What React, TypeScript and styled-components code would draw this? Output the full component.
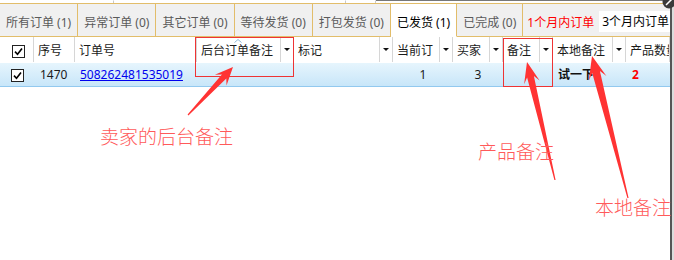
import React from "react";
import styled, { createGlobalStyle } from "styled-components";

const Global = createGlobalStyle`
  html, body { margin: 0; padding: 0; background: #fff; }
  body { font-family: "Noto Sans", "Noto Sans CJK SC", sans-serif; }
`;

const GOLD = "#e2bd6a";
const SEP = "#d6d6d6";

const Frame = styled.div`
  position: relative;
  width: 674px;
  height: 260px;
  display: flex;
  overflow: hidden;
  background: #fff;
`;

const Main = styled.div`
  width: 670px;
  display: flex;
  flex-direction: column;
  overflow: hidden;
  font-size: 12px;
`;

const EdgeDark = styled.div`
  width: 2px;
  background: #555;
`;

const EdgeLight = styled.div`
  width: 2px;
  background: #dcdcdc;
`;

const TopStrip = styled.div`
  height: 3px;
  display: flex;
`;

const StripBox = styled.div<{ $w?: number; $dark?: boolean }>`
  width: ${(p) => (p.$w ? `${p.$w}px` : "auto")};
  flex: ${(p) => (p.$w ? "none" : "1")};
  border-right: 1px solid #c8c8c8;
  border-top: 1px solid ${(p) => (p.$dark ? "#777" : "transparent")};
  box-sizing: border-box;
`;

const TabBar = styled.div`
  display: flex;
  height: 33px;
  border-top: 1px solid ${GOLD};
  background: #f0f0f0;
`;

const Tab = styled.div<{ $active?: boolean }>`
  height: 33px;
  box-sizing: border-box;
  padding: 5px 6px 0;
  display: flex;
  align-items: center;
  white-space: nowrap;
  line-height: 16px;
  color: ${(p) => (p.$active ? "#000" : "#5a5a5a")};
  background: ${(p) => (p.$active ? "#fff" : "#f0f0f0")};
  border-right: 1px solid ${GOLD};
  border-bottom: 1px solid ${(p) => (p.$active ? "#fff" : GOLD)};
`;

const TabFill = styled.div`
  flex: 1;
  height: 33px;
  box-sizing: border-box;
  display: flex;
  align-items: center;
  padding: 5px 0 0 4px;
  border-bottom: 1px solid ${GOLD};
  white-space: nowrap;
  line-height: 16px;
`;

const RedLink = styled.span`
  color: #ff0000;
`;

const PeriodBox = styled.div`
  margin-left: 5px;
  margin-top: -2px;
  height: 21px;
  flex: 1;
  background: #fff;
  display: flex;
  align-items: center;
  padding-left: 3px;
  color: #000;
`;

const HeaderRow = styled.div`
  display: flex;
  height: 25px;
  border-bottom: 1px solid #fff;
`;

const HCell = styled.div<{ $w?: number }>`
  position: relative;
  width: ${(p) => (p.$w ? `${p.$w}px` : "auto")};
  flex: ${(p) => (p.$w ? "none" : "1")};
  box-sizing: border-box;
  border-right: 1px solid ${SEP};
  display: flex;
  align-items: stretch;
  overflow: hidden;
  color: #1a1a1a;
  white-space: nowrap;
`;

const HLabel = styled.div<{ $center?: boolean }>`
  flex: 1;
  display: flex;
  align-items: center;
  justify-content: ${(p) => (p.$center ? "center" : "flex-start")};
  padding: 3px 0 0 4px;
  line-height: 16px;
  overflow: hidden;
`;

const DropBtn = styled.div`
  width: 12px;
  flex: none;
  border-left: 1px solid ${SEP};
  display: flex;
  align-items: center;
  justify-content: center;
  &::after {
    content: "";
    width: 0;
    height: 0;
    border-left: 3px solid transparent;
    border-right: 3px solid transparent;
    border-top: 3px solid #111;
  }
`;

const SortCaret = styled.svg`
  position: absolute;
  left: 37px;
  top: 2px;
`;

const DataRow = styled.div`
  display: flex;
  height: 24px;
  box-sizing: border-box;
  background: linear-gradient(#e6f5fd, #c8e6f9);
  border-bottom: 1px solid #92c9ef;
`;

const DCell = styled.div<{ $w?: number; $center?: boolean; $pad?: number }>`
  width: ${(p) => (p.$w ? `${p.$w}px` : "auto")};
  flex: ${(p) => (p.$w ? "none" : "1")};
  box-sizing: border-box;
  display: flex;
  align-items: center;
  justify-content: ${(p) => (p.$center ? "center" : "flex-start")};
  padding-left: ${(p) => p.$pad ?? 0}px;
  padding-top: 1px;
  white-space: nowrap;
  overflow: hidden;
  color: #1a1a1a;
  line-height: 16px;
`;

const OrderLink = styled.a`
  color: #0000ee;
  text-decoration: underline;
  cursor: pointer;
`;

const Strong = styled.span<{ $red?: boolean }>`
  font-weight: 700;
  color: ${(p) => (p.$red ? "#ff0000" : "#111")};
`;

const Box = styled.div`
  width: 13px;
  height: 13px;
  box-sizing: border-box;
  border: 1px solid #222;
  background: #fff;
  display: flex;
  align-items: center;
  justify-content: center;
`;

const Blank = styled.div`
  flex: 1;
`;

/* ---- annotation overlay ---- */
const Overlay = styled.svg`
  position: absolute;
  left: 0;
  top: 0;
  pointer-events: none;
`;

const RedFrame = styled.div<{ $x: number; $y: number; $w: number; $h: number }>`
  position: absolute;
  left: ${(p) => p.$x}px;
  top: ${(p) => p.$y}px;
  width: ${(p) => p.$w}px;
  height: ${(p) => p.$h}px;
  box-sizing: border-box;
  border: 1.5px solid #ee3434;
  pointer-events: none;
`;

const Note = styled.div<{ $x: number; $y: number }>`
  position: absolute;
  left: ${(p) => p.$x}px;
  top: ${(p) => p.$y}px;
  font-family: "Noto Sans CJK SC", sans-serif;
  font-size: 19px;
  line-height: 19px;
  font-weight: 300;
  color: #ff5a5a;
  white-space: nowrap;
`;

const Corner = styled.svg`
  position: absolute;
  right: 0;
  top: -5px;
`;

function Check() {
  return (
    <svg width="9" height="9" viewBox="0 0 9 9">
      <path d="M1 4.6 L3.5 7.2 L8 1.4" fill="none" stroke="#000" strokeWidth="1.6" />
    </svg>
  );
}

function arrowPoints(tx: number, ty: number, hx: number, hy: number, headLen: number, headW: number, neckW: number) {
  const dx = hx - tx;
  const dy = hy - ty;
  const len = Math.hypot(dx, dy);
  const ux = dx / len;
  const uy = dy / len;
  const nx = -uy;
  const ny = ux;
  const bx = hx - ux * headLen;
  const by = hy - uy * headLen;
  const ix = hx - ux * headLen * 0.72;
  const iy = hy - uy * headLen * 0.72;
  const pts: [number, number][] = [
    [hx, hy],
    [bx + (nx * headW) / 2, by + (ny * headW) / 2],
    [ix + (nx * neckW) / 2, iy + (ny * neckW) / 2],
    [tx + nx * 0.6, ty + ny * 0.6],
    [tx - nx * 0.6, ty - ny * 0.6],
    [ix - (nx * neckW) / 2, iy - (ny * neckW) / 2],
    [bx - (nx * headW) / 2, by - (ny * headW) / 2],
  ];
  return pts.map((p) => p.map((v) => v.toFixed(1)).join(",")).join(" ");
}

const tabs = [
  { t: "所有订单 (1)" },
  { t: "异常订单 (0)" },
  { t: "其它订单 (0)" },
  { t: "等待发货 (0)" },
  { t: "打包发货 (0)" },
  { t: "已发货 (1)", active: true },
  { t: "已完成 (0)" },
];

type Col = { w?: number; label?: string; drop?: boolean; sort?: boolean };
const cols: Col[] = [
  { w: 34 },
  { w: 41, label: "序号" },
  { w: 122, label: "订单号" },
  { w: 97, label: "后台订单备注", drop: true, sort: true },
  { w: 99, label: "标记", drop: true },
  { w: 60, label: "当前订", drop: true },
  { w: 50, label: "买家", drop: true },
  { w: 50, label: "备注", drop: true },
  { w: 73, label: "本地备注", drop: true },
  { label: "产品数量" },
];

export default function App() {
  return (
    <>
      <Global />
      <Frame>
        <Main>
          <TopStrip>
            <StripBox $w={114} />
            <StripBox $w={232} />
            <StripBox $w={30} />
            <StripBox $dark />
          </TopStrip>
          <TabBar>
            {tabs.map((tb) => (
              <Tab key={tb.t} $active={tb.active}>
                {tb.t}
              </Tab>
            ))}
            <TabFill>
              <RedLink>1个月内订单</RedLink>
              <PeriodBox>3个月内订单</PeriodBox>
            </TabFill>
          </TabBar>
          <HeaderRow>
            {cols.map((c, i) => (
              <HCell key={i} $w={c.w}>
                {i === 0 ? (
                  <HLabel $center>
                    <Box>
                      <Check />
                    </Box>
                  </HLabel>
                ) : (
                  <HLabel>{c.label}</HLabel>
                )}
                {c.drop && <DropBtn />}
                {c.sort && (
                  <SortCaret width="8" height="4" viewBox="0 0 8 4">
                    <path d="M0.5 3.5 L4 0.5 L7.5 3.5" fill="none" stroke="#8fb8d8" strokeWidth="1" />
                  </SortCaret>
                )}
              </HCell>
            ))}
          </HeaderRow>
          <DataRow>
            <DCell $w={34} $center>
              <Box>
                <Check />
              </Box>
            </DCell>
            <DCell $w={41} $pad={6}>1470</DCell>
            <DCell $w={122} $pad={5}>
              <OrderLink>508262481535019</OrderLink>
            </DCell>
            <DCell $w={97} />
            <DCell $w={99} />
            <DCell $w={60} $center>1</DCell>
            <DCell $w={50} $center>3</DCell>
            <DCell $w={50} />
            <DCell $w={73} $pad={5}>
              <Strong>试一下</Strong>
            </DCell>
            <DCell $pad={6}>
              <Strong $red>2</Strong>
            </DCell>
          </DataRow>
          <Blank />
        </Main>
        <EdgeDark />
        <EdgeLight />

        <RedFrame $x={195} $y={37} $w={99} $h={40} />
        <RedFrame $x={503} $y={38} $w={50} $h={49} />
        <Overlay width="674" height="260" viewBox="0 0 674 260">
          <polygon points={arrowPoints(188, 115, 233, 67, 18, 16, 6)} fill="#ff3333" />
          <polygon points={arrowPoints(555, 180, 527, 62, 21, 16, 7)} fill="#ff3333" />
          <polygon points={arrowPoints(628, 198, 592, 56, 23, 18, 8)} fill="#ff3333" />
        </Overlay>
        <Note $x={100} $y={126}>卖家的后台备注</Note>
        <Note $x={478} $y={141}>产品备注</Note>
        <Note $x={595} $y={197}>本地备注</Note>
        <Corner width="12" height="14" viewBox="0 0 12 14">
          <circle cx="7" cy="7" r="6.5" fill="#3a3a3a" />
          <path d="M4 10 L10 4" stroke="#fff" strokeWidth="1.5" />
        </Corner>
      </Frame>
    </>
  );
}
